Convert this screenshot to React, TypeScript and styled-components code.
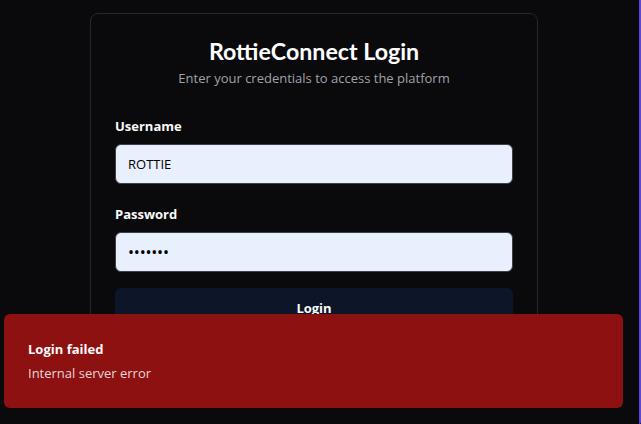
import React from "react";
import styled, { createGlobalStyle } from "styled-components";

const Global = createGlobalStyle`
  html, body { margin: 0; padding: 0; background: #0a0a0c; }
  body { font-family: "Open Sans", "Noto Sans", sans-serif; color: #fafafa; overflow: hidden; }
  * { box-sizing: border-box; }
`;

const Page = styled.div`
  position: relative;
  width: 641px;
  height: 424px;
  background: #0a0a0c;
  padding: 13px 0 0 90px;
`;

const Card = styled.div`
  width: 448px;
  border: 1px solid #27272b;
  border-radius: 8px;
  padding: 21px 24px 24px;
`;

const Header = styled.div`
  display: flex;
  flex-direction: column;
  align-items: center;
  gap: 1px;
  margin-bottom: 28px;
`;

const Title = styled.h1`
  margin: 0;
  font-family: "Lato", "Open Sans", sans-serif;
  font-size: 23.2px;
  line-height: 32px;
  font-weight: 700;
  color: #ffffff;
`;

const Subtitle = styled.p`
  margin: 0;
  font-size: 13px;
  line-height: 20px;
  color: #a1a1aa;
`;

const Form = styled.form`
  display: flex;
  flex-direction: column;
  gap: 16px;
`;

const Field = styled.div`
  display: flex;
  flex-direction: column;
  gap: 8px;
  & + & {
    margin-top: 4px;
  }
`;

const Label = styled.label`
  font-size: 13px;
  line-height: 20px;
  font-weight: 700;
  color: #fafafa;
`;

const Input = styled.input`
  height: 40px;
  width: 100%;
  border: 1px solid #3f3f46;
  border-radius: 6px;
  background: #e8f0fe;
  color: #000;
  padding: 0 12px;
  font-family: inherit;
  font-size: 13px;
  outline: none;
  &[type="password"] {
    font-size: 16px;
    letter-spacing: -0.2px;
  }
`;

const Button = styled.button`
  height: 40px;
  width: 100%;
  border: none;
  border-radius: 6px;
  background: #0c1628;
  color: #fafafa;
  font-family: inherit;
  font-weight: 700;
  font-size: 13px;
`;

const Toast = styled.div`
  position: absolute;
  left: 4px;
  top: 314px;
  width: 619px;
  height: 94px;
  border-radius: 6px;
  background: #8e1111;
  padding: 25px 24px;
  display: flex;
  flex-direction: column;
  gap: 4px;
`;

const ToastTitle = styled.div`
  font-size: 13px;
  line-height: 20px;
  font-weight: 700;
  color: #fafafa;
`;

const ToastText = styled.div`
  font-size: 13px;
  line-height: 20px;
  color: rgba(250, 250, 250, 0.85);
`;

const Edge = styled.div`
  position: absolute;
  right: 0;
  top: 0;
  width: 2px;
  height: 424px;
  background: #5b46d8;
  border-bottom-right-radius: 4px;
`;

export default function App() {
  return (
    <>
      <Global />
      <Page>
        <Card>
          <Header>
            <Title>RottieConnect Login</Title>
            <Subtitle>Enter your credentials to access the platform</Subtitle>
          </Header>
          <Form onSubmit={(e) => e.preventDefault()}>
            <Field>
              <Label>Username</Label>
              <Input defaultValue="ROTTIE" />
            </Field>
            <Field>
              <Label>Password</Label>
              <Input type="password" defaultValue="1234567" />
            </Field>
            <Button>Login</Button>
          </Form>
        </Card>
        <Toast>
          <ToastTitle>Login failed</ToastTitle>
          <ToastText>Internal server error</ToastText>
        </Toast>
        <Edge />
      </Page>
    </>
  );
}
